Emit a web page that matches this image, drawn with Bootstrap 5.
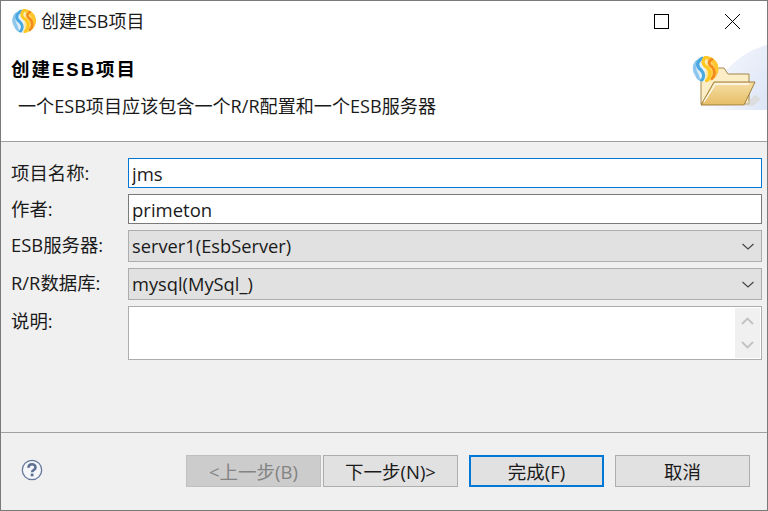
<!DOCTYPE html>
<html lang="zh-CN">
<head>
<meta charset="utf-8">
<title>创建ESB项目</title>
<link href="https://cdn.jsdelivr.net/npm/bootstrap@5.3.0/dist/css/bootstrap.min.css" rel="stylesheet">
<style>
html,body{height:100%;margin:0;background:#f0f0f0;overflow:hidden}
body{font-family:"Open Sans","Noto Sans CJK SC",sans-serif;font-size:18px;color:#1a1a1a}
.dlg{width:768px;height:511px;border:1px solid #7a7a7a;display:flex;flex-direction:column;background:#f0f0f0}
.ttl{height:40px;background:#fff;flex:none;padding-left:11px;gap:5px}
.ttl-txt{font-size:18px;line-height:22px}
.winbtns{margin-left:auto;gap:56px;padding-right:27px}
.banner{height:101px;background:#fff;border-bottom:1px solid #a0a0a0;flex:none;padding:0 0 0 10px}
.b-title{font-family:"Liberation Sans","Noto Sans CJK SC",sans-serif;font-weight:700;font-size:18.500px;line-height:24px;margin-top:17px;letter-spacing:2px;color:#000}
.b-sub{font-size:18.100px;line-height:24px;margin:12px 0 0 7px}
.b-art{position:absolute;right:0;top:3px}
.frm{padding:16px 5px 0 10px;gap:6px;flex:none}
.lbl{width:117px;flex:none;line-height:30px;font-size:18.400px;margin:0;padding:0}
.fld.form-control,.fld.form-select{height:30px;border-radius:0;border:1px solid #7a7a7a;padding:0 3px;font-size:18.500px;line-height:28px;color:#1a1a1a;box-shadow:none;font-family:inherit}
.fld.form-control.act{border-color:#0078d7}
.fld.form-select{height:32px;line-height:30px;font-size:18.300px;background-color:#e1e1e1;border-color:#adadad;padding:0 30px 0 3px;background-size:12px 7px;background-position:right 7px center;background-image:url("data:image/svg+xml,%3Csvg xmlns='http://www.w3.org/2000/svg' viewBox='0 0 12 7'%3E%3Cpath d='M.5 1l5.500 5 5.500-5' fill='none' stroke='%23444' stroke-width='1.1'/%3E%3C/svg%3E")}
.memo{height:54px;border:1px solid #adadad;background:#fff;flex:1;min-width:0;padding:1px}
.memo-sb{width:25px;height:100%;margin-left:auto;background:#f0f0f0;padding:9px 0;justify-content:space-between}
.foot{margin-top:auto;height:78px;border-top:1px solid #a0a0a0;flex:none;padding:22px 17px 0 20px}
.act-btn.btn{width:135px;height:32px;border-radius:0;border:1px solid #adadad;background:#e1e1e1;color:#1a1a1a;font-size:18.500px;line-height:28px;padding:2px 0 0;font-family:inherit}
.act-btn.btn.off{background:#cccccc;border-color:#bfbfbf;color:#838383;opacity:1}
.act-btn.btn.main{border:2px solid #0078d7;line-height:26px;padding-top:1px}
.btns{margin-left:auto;gap:2px}
.sep-gap{margin-left:9px}
.hidden-defs{position:absolute;width:0;height:0}
</style>
</head>
<body>
<svg class="hidden-defs" aria-hidden="true">
  <defs>
    <clipPath id="ballclip"><circle cx="12" cy="12" r="12"/></clipPath>
    <linearGradient id="ballbg" x1="0" y1="0" x2="1" y2="0"><stop offset="0" stop-color="#bfe0f5"/><stop offset=".45" stop-color="#eef6fb"/><stop offset=".6" stop-color="#ffe27a"/><stop offset="1" stop-color="#ffb52e"/></linearGradient>
    <symbol id="ball" viewBox="0 0 24 24">
      <g clip-path="url(#ballclip)" fill="none" stroke-linecap="round">
        <circle cx="12" cy="12" r="12" fill="url(#ballbg)" stroke="none"/>
        <path d="M4 5C0 10 2 14 4 17c1 2 1 4 2 5" stroke="#8cc6ec" stroke-width="3"/>
        <path d="M9 2C3 6 4 10 8 13c3 3 3 7 0 10" stroke="#4aa8e0" stroke-width="3"/>
        <path d="M14 1.500c6 1.500 9 6.500 8.500 11.500" stroke="#ffc62e" stroke-width="3.500"/>
        <path d="M12 1C8 5 10 9 14 11c3 3 3 8-1 12" stroke="#ffc81e" stroke-width="3"/>
        <path d="M18 3c-4 2-3 5 0 7 3 3 3 8 0 11" stroke="#f28a1c" stroke-width="2.500"/>
      </g>
    </symbol>
  </defs>
</svg>
<div class="dlg">
  <div class="ttl d-flex align-items-center">
    <svg width="24" height="24"><use href="#ball"/></svg>
    <span class="ttl-txt">创建ESB项目</span>
    <div class="winbtns d-flex align-items-center">
      <svg width="15" height="15" viewBox="0 0 15 15"><rect x=".5" y=".5" width="14" height="14" fill="none" stroke="#000"/></svg>
      <svg width="15" height="15" viewBox="0 0 15 15"><path d="M0 0l15 15M15 0L0 15" stroke="#000" fill="none"/></svg>
    </div>
  </div>
  <div class="banner position-relative">
    <div class="b-title">创建ESB项目</div>
    <div class="b-sub">一个ESB项目应该包含一个R/R配置和一个ESB服务器</div>
    <svg class="b-art" width="76" height="67" viewBox="0 0 76 67">
      <defs>
        <linearGradient id="fld" x1="0" y1="0" x2="0" y2="1"><stop offset="0" stop-color="#f6dfa6"/><stop offset="1" stop-color="#e6bd66"/></linearGradient>
        <linearGradient id="sky" x1="0" y1="0" x2="1" y2="1"><stop offset="0" stop-color="#f3f6fc"/><stop offset="1" stop-color="#dde5f6"/></linearGradient>
        <linearGradient id="shd" x1="0" y1="0" x2="1" y2="0"><stop offset="0" stop-color="#fff"/><stop offset="1" stop-color="#dde5f6"/></linearGradient>
      </defs>
      <path d="M76 1C58 6 44 16 32 30L6 66h70z" fill="url(#shd)"/>
      <path d="M76 1C58 6 44 16 34 28c10-6 14 6 6 32h36z" fill="url(#sky)"/>
      <path d="M10 60V24h23l4 6h21v30z" fill="#fbeec6" stroke="#a3864a"/>
      <path d="M10 61L23 38h41L53 61z" fill="url(#fld)" stroke="#9e7d3a"/>
      <path d="M13 58L24.500 40H58" fill="none" stroke="#fff" stroke-width="1.300" opacity=".9"/>
      <path d="M53 61l11-10 6 4-8 7H10z" fill="#d8d4cc" opacity=".55"/>
      <use href="#ball" x="1.500" y="12" width="26" height="26"/>
    </svg>
  </div>
  <div class="frm d-flex flex-column">
    <div class="d-flex"><label class="lbl form-label">项目名称:</label><input class="form-control fld act" value="jms"></div>
    <div class="d-flex"><label class="lbl form-label">作者:</label><input class="form-control fld" value="primeton"></div>
    <div class="d-flex"><label class="lbl form-label">ESB服务器:</label><select class="form-select fld"><option>server1(EsbServer)</option></select></div>
    <div class="d-flex"><label class="lbl form-label">R/R数据库:</label><select class="form-select fld"><option>mysql(MySql_)</option></select></div>
    <div class="d-flex"><label class="lbl form-label">说明:</label>
      <div class="memo d-flex"><div class="memo-sb d-flex flex-column align-items-center">
        <svg width="13" height="8" viewBox="0 0 13 8"><path d="M1 7l5.500-5.500L12 7" fill="none" stroke="#c2c2c2" stroke-width="1.800"/></svg>
        <svg width="13" height="8" viewBox="0 0 13 8"><path d="M1 1l5.500 5.500L12 1" fill="none" stroke="#c2c2c2" stroke-width="1.800"/></svg>
      </div></div>
    </div>
  </div>
  <div class="foot d-flex align-items-start">
    <svg class="mt-1" width="22" height="22" viewBox="0 0 22 22"><circle cx="11" cy="11" r="9.700" fill="#f4f6fa" stroke="#67799b" stroke-width="1.300"/><path d="M7.500 8.800c0-4.600 7-4.600 7-.4 0 2.600-3.400 2.600-3.400 4.900" fill="none" stroke="#5d6f92" stroke-width="2.600"/><rect x="9.700" y="14.600" width="2.800" height="2.700" fill="#5d6f92"/></svg>
    <div class="btns d-flex">
      <button class="btn act-btn off" disabled>&lt;上一步(B)</button>
      <button class="btn act-btn">下一步(N)&gt;</button>
      <button class="btn act-btn main sep-gap">完成(F)</button>
      <button class="btn act-btn sep-gap">取消</button>
    </div>
  </div>
</div>
</body>
</html>
